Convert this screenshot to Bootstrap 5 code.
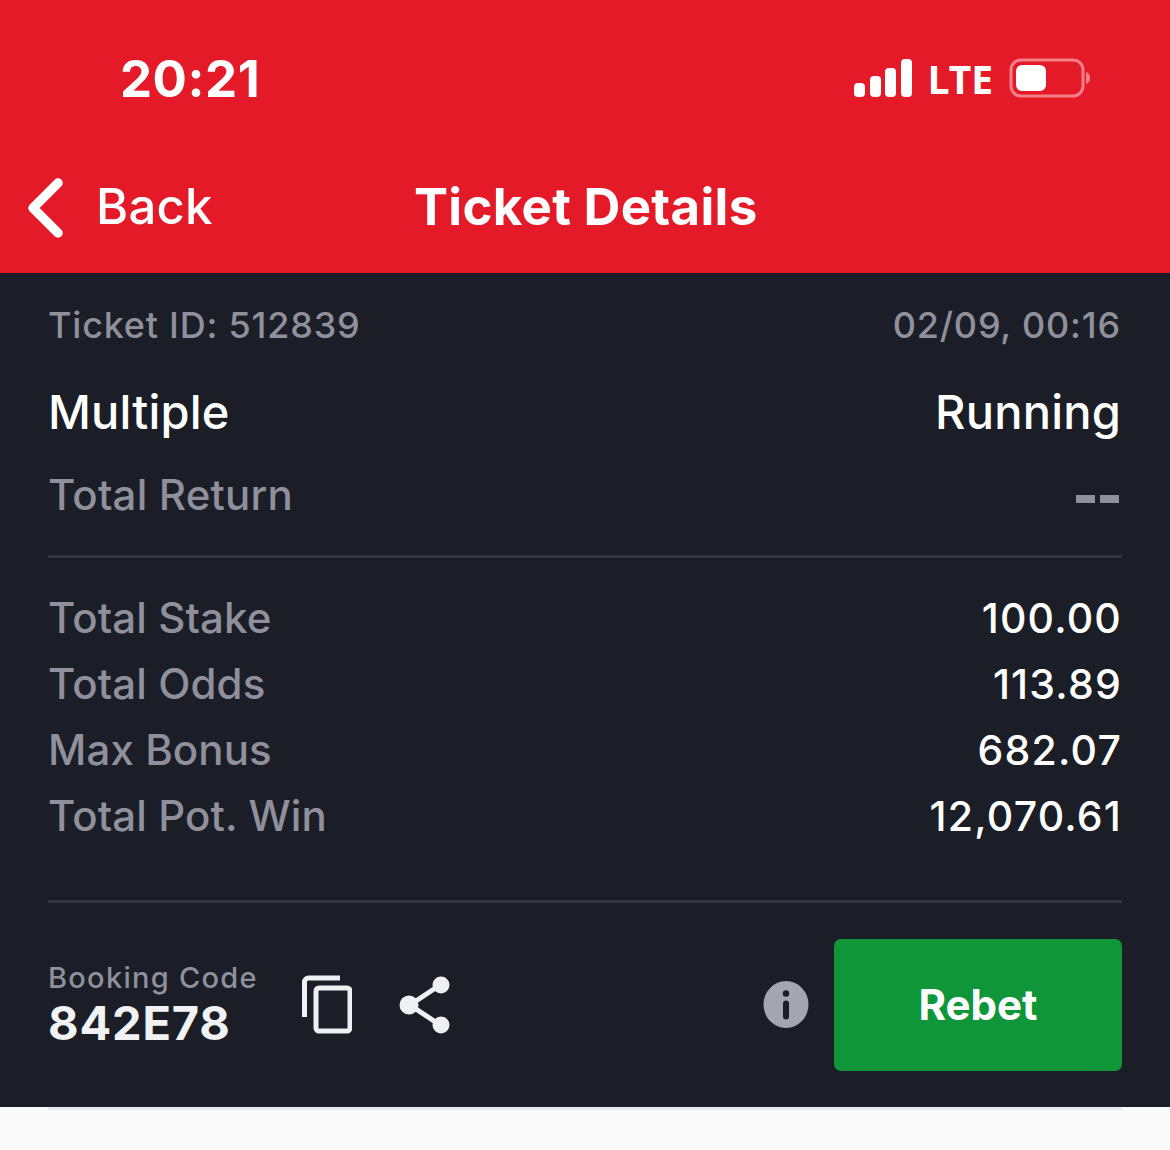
<!DOCTYPE html>
<html lang="en">
<head>
<meta charset="utf-8">
<title>Ticket Details</title>
<link href="https://cdn.jsdelivr.net/npm/bootstrap@5.3.0/dist/css/bootstrap.min.css" rel="stylesheet">
<style>
html,body{margin:0;height:1150px;overflow:hidden;background:#fafafa;}
body{font-family:Inter,"Liberation Sans",sans-serif;}
.hdr{background:#e51a29;height:273px;color:#fff;}
.status-row{height:156px;padding:0 79px 0 120px;}
.clock{font-size:51px;font-weight:700;letter-spacing:.5px;line-height:1;}
.lte{font-size:39px;font-weight:700;line-height:1;font-family:"Noto Sans",sans-serif;margin:0 16px 0 14px;}
.nav-row{height:117px;padding:0 0 13px 26px;position:relative;}
.back-txt{font-size:49px;font-weight:500;line-height:1;margin-left:32px;margin-top:-3px;letter-spacing:.2px;}
.hdr-title{font-size:51px;font-weight:700;line-height:1;position:absolute;left:414px;top:25px;letter-spacing:.3px;}
.panel{background:#1b1e26;height:834px;padding:0 49px 0 48px;}
.muted-t{color:#8f909c;}
.r-id{height:115px;font-size:36px;font-weight:500;letter-spacing:.78px;}
.r-id>div{line-height:1;padding-top:34px;}
.r-multi{font-size:47px;font-weight:500;color:#fff;line-height:1;height:61px;letter-spacing:.2px;}
.r-ret{font-size:42px;font-weight:500;line-height:1;padding-top:25px;height:106px;letter-spacing:.2px;}
.dash{display:flex;gap:5px;padding-top:21px;padding-right:2px;}
.dash i{display:block;width:19px;height:8px;background:#8f909c;}
.rule{height:3px;background:#33363f;margin:0 -1px 0 0;}
.stats{padding-top:27px;height:342px;}
.stat-row{height:66px;font-size:42px;font-weight:500;line-height:66px;letter-spacing:.1px;}
.stat-row .val{color:#fff;letter-spacing:1.2px;font-size:41px;margin-right:-1px;}
.foot{padding-top:36px;margin-right:-1px;}
.bc-label{font-size:29px;font-weight:500;line-height:1;color:#8f909c;letter-spacing:1.28px;margin-top:-2px;}
.bc-code{font-size:47px;font-weight:700;line-height:1;color:#f1f2f4;margin-top:7px;letter-spacing:.8px;}
.rebet-btn{width:288px;height:132px;background:#0f9638;border:0;border-radius:7px;color:#fff;font-size:42px;font-weight:700;padding-top:4px;}
.rebet-btn:hover{background:#0f9638;color:#fff;}
.ic-copy{margin-left:44px;margin-bottom:1px;}
.ic-share{margin-left:47px;margin-bottom:1px;}
.ic-info{margin-right:25px;margin-bottom:1px;}
.bottom-line{height:3px;background:#e9eaef;margin:0 48px;}
</style>
</head>
<body>
<div class="hdr">
  <div class="status-row d-flex align-items-center justify-content-between">
    <div class="clock">20:21</div>
    <div class="d-flex align-items-center">
      <svg width="60" height="38" viewBox="0 0 60 38"><g fill="#fff"><rect x="0" y="24" width="11" height="14" rx="4"/><rect x="16" y="17" width="11" height="21" rx="4"/><rect x="31" y="9" width="11" height="29" rx="4"/><rect x="47" y="0" width="11" height="38" rx="4"/></g></svg>
      <span class="lte">LTE</span>
      <svg width="82" height="40" viewBox="0 0 82 40"><rect x="2" y="2" width="72" height="36" rx="10" fill="none" stroke="#f5808a" stroke-width="3"/><rect x="7" y="7" width="30" height="26" rx="6" fill="#fff"/><path d="M77 14c3 1 4 3 4 6s-1 5-4 6z" fill="#f5808a"/></svg>
    </div>
  </div>
  <div class="nav-row d-flex align-items-center">
    <svg width="38" height="60" viewBox="0 0 38 60"><path d="M32 5 7 30l25 25" fill="none" stroke="#fff" stroke-width="9.500" stroke-linecap="round" stroke-linejoin="round"/></svg>
    <span class="back-txt">Back</span>
    <span class="hdr-title">Ticket Details</span>
  </div>
</div>
<div class="panel">
  <div class="r-id d-flex justify-content-between muted-t"><div>Ticket ID: 512839</div><div>02/09, 00:16</div></div>
  <div class="r-multi d-flex justify-content-between"><div>Multiple</div><div>Running</div></div>
  <div class="r-ret d-flex justify-content-between muted-t"><div>Total Return</div><div class="dash"><i></i><i></i></div></div>
  <div class="rule"></div>
  <div class="stats">
    <div class="stat-row d-flex justify-content-between"><span class="muted-t">Total Stake</span><span class="val">100.00</span></div>
    <div class="stat-row d-flex justify-content-between"><span class="muted-t">Total Odds</span><span class="val">113.89</span></div>
    <div class="stat-row d-flex justify-content-between"><span class="muted-t">Max Bonus</span><span class="val">682.07</span></div>
    <div class="stat-row d-flex justify-content-between"><span class="muted-t">Total Pot. Win</span><span class="val">12,070.61</span></div>
  </div>
  <div class="rule"></div>
  <div class="foot d-flex align-items-center">
    <div>
      <div class="bc-label">Booking Code</div>
      <div class="bc-code">842E78</div>
    </div>
    <svg class="ic-copy" width="50" height="60" viewBox="0 0 50 60" fill="none" stroke="#eff0f3" stroke-width="5"><path d="M2.500 42V7a4 4 0 0 1 4-4H38"/><rect x="14" y="13" width="34" height="43" rx="3"/></svg>
    <svg class="ic-share" width="52" height="58" viewBox="0 0 52 58" fill="#eff0f3"><path d="M41 9 11 29l30 20" fill="none" stroke="#eff0f3" stroke-width="5"/><circle cx="42" cy="9" r="8.500"/><circle cx="42" cy="49" r="8.500"/><circle cx="10" cy="29" r="9.500"/></svg>
    <svg class="ic-info ms-auto" width="46" height="47" viewBox="0 0 46 47"><ellipse cx="23" cy="23.500" rx="22.500" ry="23.500" fill="#a4a5af"/><circle cx="23" cy="12.500" r="3.200" fill="#1b1e26"/><rect x="20" y="19.500" width="6" height="19" rx="3" fill="#1b1e26"/></svg>
    <button type="button" class="btn rebet-btn">Rebet</button>
  </div>
</div>
<div class="bottom-line"></div>
</body>
</html>
